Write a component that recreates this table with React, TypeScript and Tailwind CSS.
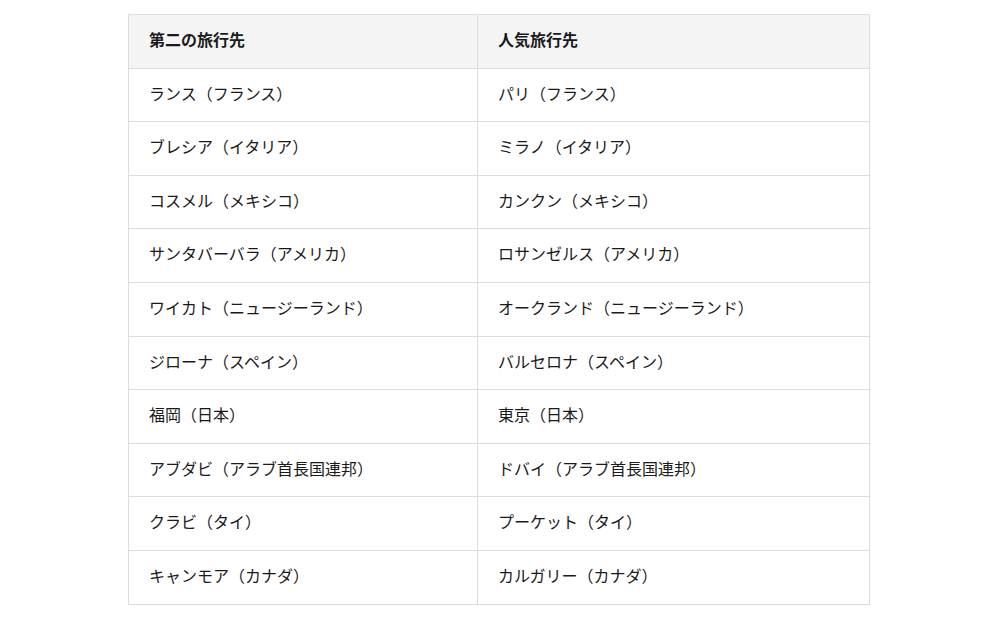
import React from "react";

const rows: [string, string][] = [
  ["ランス（フランス）", "パリ（フランス）"],
  ["ブレシア（イタリア）", "ミラノ（イタリア）"],
  ["コスメル（メキシコ）", "カンクン（メキシコ）"],
  ["サンタバーバラ（アメリカ）", "ロサンゼルス（アメリカ）"],
  ["ワイカト（ニュージーランド）", "オークランド（ニュージーランド）"],
  ["ジローナ（スペイン）", "バルセロナ（スペイン）"],
  ["福岡（日本）", "東京（日本）"],
  ["アブダビ（アラブ首長国連邦）", "ドバイ（アラブ首長国連邦）"],
  ["クラビ（タイ）", "プーケット（タイ）"],
  ["キャンモア（カナダ）", "カルガリー（カナダ）"],
];

export default function App() {
  return (
    <div
      className="w-[1000px] h-[627px] bg-white pt-[14px]"
      style={{ fontFamily: '"Noto Sans CJK JP", "Noto Sans", sans-serif' }}
    >
      <table className="ml-[128px] w-[741px] border-collapse text-[16px] text-[#1a1a1a] table-fixed">
        <colgroup>
          <col className="w-[349px]" />
          <col className="w-[392px]" />
        </colgroup>
        <thead>
          <tr className="bg-[#f4f4f4]">
            <th className="border border-[#dddddd] px-[20px] pt-[13px] pb-[17px] leading-[22.6px] text-left font-bold">
              第二の旅行先
            </th>
            <th className="border border-[#dddddd] px-[20px] pt-[13px] pb-[17px] leading-[22.6px] text-left font-bold">
              人気旅行先
            </th>
          </tr>
        </thead>
        <tbody>
          {rows.map(([a, b]) => (
            <tr key={a}>
              <td className="border border-[#dddddd] px-[20px] pt-[13px] pb-[17px] leading-[22.6px]">{a}</td>
              <td className="border border-[#dddddd] px-[20px] pt-[13px] pb-[17px] leading-[22.6px]">{b}</td>
            </tr>
          ))}
        </tbody>
      </table>
    </div>
  );
}
